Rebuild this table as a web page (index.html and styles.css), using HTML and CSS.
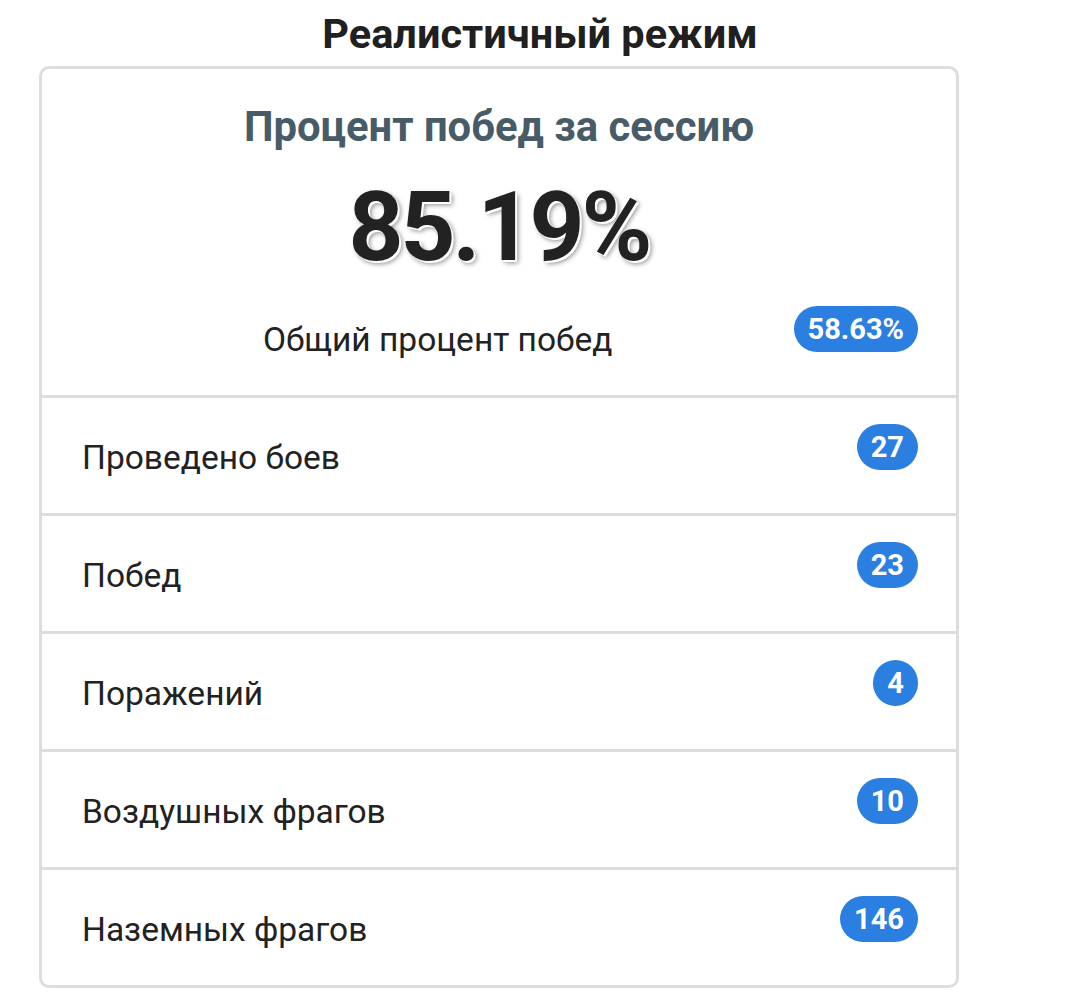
FILE: index.html
```html
<!DOCTYPE html>
<html lang="ru">
<head>
<meta charset="utf-8">
<title>Реалистичный режим</title>
<link rel="stylesheet" href="styles.css">
</head>
<body>
<h1 class="page-title">Реалистичный режим</h1>
<div class="card">
  <div class="card-head">
    <h2 class="head-title">Процент побед за сессию</h2>
    <div class="big-number">85.19%</div>
    <div class="total-row">
      <span class="total-label">Общий процент побед</span>
      <span class="badge">58.63%</span>
    </div>
  </div>
  <div class="row"><span class="label">Проведено боев</span><span class="badge">27</span></div>
  <div class="row"><span class="label">Побед</span><span class="badge">23</span></div>
  <div class="row"><span class="label">Поражений</span><span class="badge">4</span></div>
  <div class="row"><span class="label">Воздушных фрагов</span><span class="badge">10</span></div>
  <div class="row"><span class="label">Наземных фрагов</span><span class="badge">146</span></div>
</div>
</body>
</html>
```
FILE: styles.css
```css
html, body {
  margin: 0;
  padding: 0;
  background: #ffffff;
}
body {
  font-family: Roboto, "Liberation Sans", sans-serif;
  color: #222222;
  width: 1080px;
}
.page-title {
  margin: 0;
  padding-top: 8px;
  height: 58px;
  text-align: center;
  font-size: 41.5px;
  font-weight: 700;
  line-height: 52px;
  color: #202020;
}
.card {
  margin-left: 39px;
  width: 920px;
  box-sizing: border-box;
  border: 3px solid #dddddd;
  border-radius: 10px;
}
.card-head {
  height: 329px;
  box-sizing: border-box;
  padding-top: 32px;
  border-bottom: 3px solid #dddddd;
}
.head-title {
  margin: 0;
  text-align: center;
  font-size: 41.8px;
  font-weight: 700;
  line-height: 52px;
  color: #485c68;
}
.big-number {
  text-align: center;
  font-size: 96px;
  font-weight: 700;
  line-height: 110px;
  letter-spacing: -3px;
  margin-top: 19px;
  color: #222222;
  text-shadow: 2px 2px 0 #ffffff, 3px 3px 5px rgba(0,0,0,0.45);
}
.total-row {
  display: flex;
  align-items: flex-start;
  padding: 24px 38px 0 40px;
}
.total-label {
  flex: 1;
  text-align: center;
  font-size: 33.5px;
  line-height: 40px;
  margin-top: 14px;
}
.row {
  display: flex;
  align-items: flex-start;
  justify-content: space-between;
  height: 118px;
  box-sizing: border-box;
  padding: 26px 38px 0 40px;
  border-bottom: 3px solid #dddddd;
}
.row:last-child {
  border-bottom: none;
  height: 115px;
}
.label {
  font-size: 33.5px;
  line-height: 40px;
  margin-top: 14px;
}
.badge {
  display: inline-block;
  min-width: 42px;
  box-sizing: border-box;
  height: 46px;
  line-height: 46px;
  padding: 0 14px;
  border-radius: 23px;
  background: #2a7fe0;
  color: #ffffff;
  font-size: 29px;
  font-weight: 700;
  text-align: center;
}
```
